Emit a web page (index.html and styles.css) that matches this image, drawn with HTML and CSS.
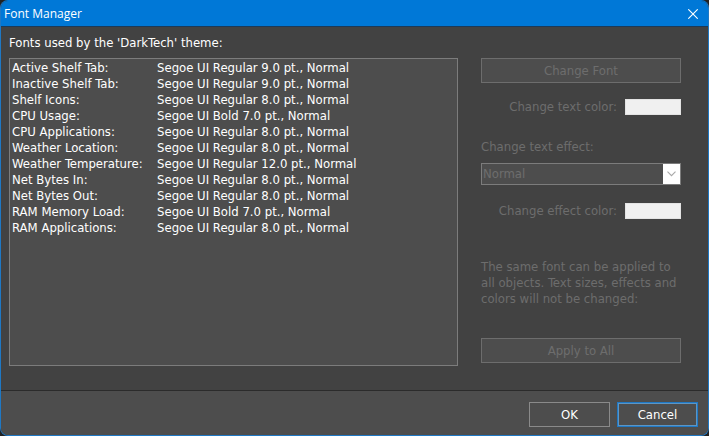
FILE: index.html
```html
<!DOCTYPE html>
<html lang="en">
<head>
    <meta charset="UTF-8">
    <meta name="viewport" content="width=device-width, initial-scale=1.0">
    <title>Font Manager</title>
    <link rel="stylesheet" href="styles.css">
</head>
<body>
    <div class="window">
        <header class="titlebar">
            <h1>Font Manager</h1>
            <button type="button" class="close" aria-label="Close">
                <svg width="10" height="10" viewBox="0 0 10 10"><path d="M0.3 0.3L9.7 9.7M9.7 0.3L0.3 9.7" fill="none" stroke="#fff" stroke-width="1.1"/></svg>
            </button>
        </header>

        <main class="content">
            <section class="fonts">
                <h2 id="fontsTitle">Fonts used by the 'DarkTech' theme:</h2>
                <div class="list">
                    <table aria-labelledby="fontsTitle">
                        <tbody>
                            <tr><th scope="row">Active Shelf Tab:</th><td>Segoe UI Regular 9.0 pt., Normal</td></tr>
                            <tr><th scope="row">Inactive Shelf Tab:</th><td>Segoe UI Regular 9.0 pt., Normal</td></tr>
                            <tr><th scope="row">Shelf Icons:</th><td>Segoe UI Regular 8.0 pt., Normal</td></tr>
                            <tr><th scope="row">CPU Usage:</th><td>Segoe UI Bold 7.0 pt., Normal</td></tr>
                            <tr><th scope="row">CPU Applications:</th><td>Segoe UI Regular 8.0 pt., Normal</td></tr>
                            <tr><th scope="row">Weather Location:</th><td>Segoe UI Regular 8.0 pt., Normal</td></tr>
                            <tr><th scope="row">Weather Temperature:</th><td>Segoe UI Regular 12.0 pt., Normal</td></tr>
                            <tr><th scope="row">Net Bytes In:</th><td>Segoe UI Regular 8.0 pt., Normal</td></tr>
                            <tr><th scope="row">Net Bytes Out:</th><td>Segoe UI Regular 8.0 pt., Normal</td></tr>
                            <tr><th scope="row">RAM Memory Load:</th><td>Segoe UI Bold 7.0 pt., Normal</td></tr>
                            <tr><th scope="row">RAM Applications:</th><td>Segoe UI Regular 8.0 pt., Normal</td></tr>
                        </tbody>
                    </table>
                </div>
            </section>

            <section class="options">
                <button type="button" class="btn" disabled>Change Font</button>
                <div class="color-row">
                    <label for="textColor">Change text color:</label>
                    <input type="color" id="textColor" class="swatch" value="#f0f0f0" disabled>
                </div>
                <label class="effect-label" for="textEffect">Change text effect:</label>
                <div class="combo">
                    <select id="textEffect" disabled>
                        <option>Normal</option>
                    </select>
                    <span class="arrow">
                        <svg width="9" height="6" viewBox="0 0 9 6"><path d="M0.5 0.7L4.5 4.7L8.5 0.7" fill="none" stroke="#a8a8a8" stroke-width="1.1"/></svg>
                    </span>
                </div>
                <div class="color-row">
                    <label for="effectColor">Change effect color:</label>
                    <input type="color" id="effectColor" class="swatch" value="#f0f0f0" disabled>
                </div>
                <p class="note">The same font can be applied to all objects. Text sizes, effects and colors will not be changed:</p>
                <button type="button" class="btn" disabled>Apply to All</button>
            </section>
        </main>

        <footer class="actions">
            <button type="button" class="btn">OK</button>
            <button type="button" class="btn focused">Cancel</button>
        </footer>
    </div>
</body>
</html>
```
FILE: styles.css
```css
* {
    margin: 0;
    padding: 0;
    box-sizing: border-box;
}

body {
    font-family: "DejaVu Sans Condensed", "DejaVu Sans", sans-serif;
    font-size: 13px;
    line-height: 16px;
    color: #fff;
    background: #222;
}

button, select {
    font: inherit;
    color: inherit;
}

.window {
    display: flex;
    flex-direction: column;
    min-height: 100vh;
    border: 1px solid #1f78c4;
    border-top-color: #0078d7;
    border-radius: 8px;
    overflow: hidden;
    background: #424242;
}

/* Title bar */
.titlebar {
    display: flex;
    justify-content: space-between;
    align-items: center;
    height: 26px;
    padding: 0 10px 0 3px;
    background: #0078d7;
    border-bottom: 1px solid #1c3a58;
}

.titlebar h1 {
    font-family: "Open Sans", sans-serif;
    font-size: 12px;
    font-weight: 400;
}

.close {
    display: flex;
    background: none;
    border: none;
}

/* Main area */
.content {
    flex: 1;
    display: flex;
    gap: 23px;
    padding: 8px 27px 24px 8px;
}

.fonts {
    flex: 1;
    display: flex;
    flex-direction: column;
    gap: 7px;
}

.fonts h2 {
    font-size: 13px;
    font-weight: 400;
}

.list {
    flex: 1;
    padding: 1px 2px;
    background: #4d4d4d;
    border: 1px solid #7c7c7c;
}

table {
    border-collapse: collapse;
}

th {
    width: 145px;
    font-weight: 400;
    text-align: left;
}

/* Right column */
.options {
    display: flex;
    flex-direction: column;
    width: 200px;
    padding-top: 23px;
    color: #6d6d6d;
}

.btn {
    height: 25px;
    background: #4d4d4d;
    border: 1px solid #8a8a8a;
}

.btn:disabled {
    border-color: #6d6d6d;
}

.color-row {
    display: flex;
    justify-content: flex-end;
    align-items: center;
    gap: 8px;
    margin: 16px 0;
}

.swatch {
    width: 56px;
    height: 16px;
    border: 1px solid #e3e3e3;
    background: #f0f0f0;
    appearance: none;
}

.swatch::-webkit-color-swatch-wrapper {
    padding: 0;
}

.swatch::-webkit-color-swatch {
    border: none;
}

.effect-label {
    margin: 8px 0;
}

.combo {
    display: flex;
    height: 22px;
    margin-bottom: 2px;
    background: #4d4d4d;
    border: 1px solid #7c7c7c;
}

.combo select {
    flex: 1;
    padding-left: 1px;
    background: none;
    border: none;
    opacity: 1;
    appearance: none;
}

.arrow {
    display: flex;
    justify-content: center;
    align-items: center;
    width: 17px;
    background: #fff;
}

.note {
    margin: 24px 0 31px;
}

/* Bottom buttons */
.actions {
    display: flex;
    justify-content: flex-end;
    gap: 7px;
    padding: 11px 10px 8px;
    background: #4d4d4d;
    border-top: 1px solid #2b2b2b;
}

.actions .btn {
    width: 81px;
}

.actions .focused {
    border-color: #1f78c4;
    box-shadow: inset 0 0 0 1px #5c95c4;
}
```
